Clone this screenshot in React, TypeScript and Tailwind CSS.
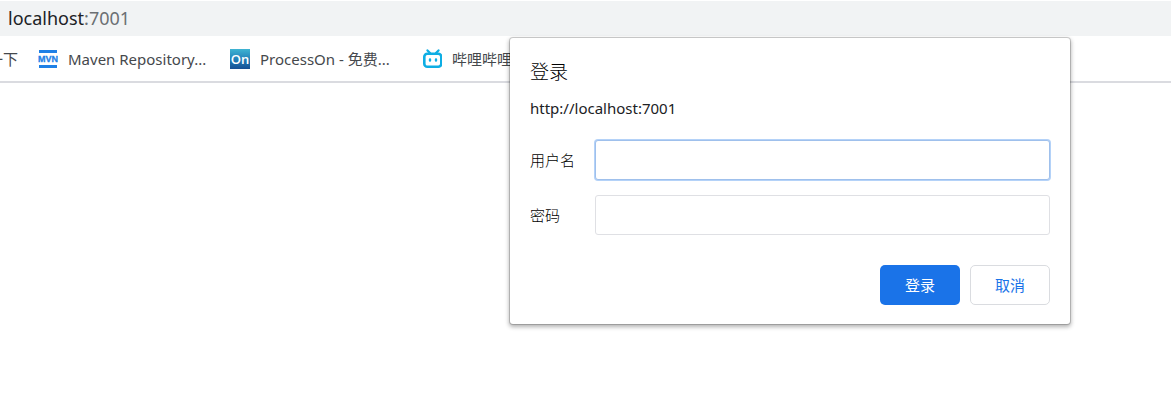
import type { ReactNode } from "react";

const MavenIcon = () => (
  <svg viewBox="0 0 20 20" className="size-5 shrink-0" aria-hidden="true">
    <path d="M1 1h18v3H1zM1 16h18v3H1z" fill="#1e80e6" />
    <text
      x="10"
      y="13"
      textAnchor="middle"
      className="font-['Liberation_Sans',sans-serif] text-[9px] font-bold"
      fill="#1e80e6"
      stroke="#1e80e6"
      strokeWidth="0.3"
    >
      MVN
    </text>
  </svg>
);

const ProcessOnIcon = () => (
  <svg viewBox="0 0 20 20" className="size-5 shrink-0" aria-hidden="true">
    <defs>
      <linearGradient id="process-on" x1="0" y1="0" x2="0" y2="1">
        <stop offset="0" stopColor="#3fb4d2" />
        <stop offset="0.5" stopColor="#2482b9" />
        <stop offset="1" stopColor="#164f93" />
      </linearGradient>
    </defs>
    <rect width="20" height="20" fill="url(#process-on)" />
    <text
      x="10"
      y="15"
      textAnchor="middle"
      className="font-['Open_Sans',sans-serif] text-[13px] font-semibold"
      fill="#fff"
    >
      On
    </text>
  </svg>
);

const BilibiliIcon = () => (
  <svg
    viewBox="0 0 20 20"
    className="size-5 shrink-0"
    fill="none"
    stroke="#0eaee4"
    strokeLinecap="round"
    aria-hidden="true"
  >
    <path d="M5.5 1.4 8 4M16.5 1.4 14 4" strokeWidth="2.2" />
    <rect x="2.3" y="4.8" width="17" height="13" rx="3" strokeWidth="2.6" />
    <path d="M8 10.4v1.2M14 10.4v1.2" strokeWidth="2.4" />
  </svg>
);

interface BookmarkProps {
  icon: ReactNode;
  label: string;
}

const Bookmark = ({ icon, label }: BookmarkProps) => (
  <a href="#" className="flex w-48 shrink-0 items-center gap-2.5">
    {icon}
    <span className="whitespace-nowrap pt-0.5">{label}</span>
  </a>
);

interface FieldProps {
  id: string;
  label: string;
  type: string;
  className: string;
}

const Field = ({ id, label, type, className }: FieldProps) => (
  <div className="flex items-center">
    <label htmlFor={id} className="w-[65px] shrink-0 font-light text-black">
      {label}
    </label>
    <input
      id={id}
      type={type}
      className={`h-10 min-w-0 flex-1 rounded-[3px] border bg-white px-3 outline-none ${className}`}
    />
  </div>
);

const LoginDialog = () => (
  <form
    role="dialog"
    aria-labelledby="dialog-title"
    onSubmit={(e) => e.preventDefault()}
    className="absolute top-[38px] left-[510px] w-[560px] rounded-[3px] bg-white px-5 pt-5 pb-[19px] text-[15px] leading-5 text-[#202124] shadow-[0_0_0_1px_rgba(0,0,0,0.16),0_2px_4px_1px_rgba(0,0,0,0.3)]"
  >
    <h1
      id="dialog-title"
      className="text-[19px] leading-7 font-light text-black"
    >
      登录
    </h1>
    <p className="mt-3">http://localhost:7001</p>
    <div className="mt-[22px] flex flex-col gap-[15px]">
      <Field
        id="username"
        label="用户名"
        type="text"
        className="border-[#9fc0ec] shadow-[0_0_0_1px_#b4d2f8]"
      />
      <Field
        id="password"
        label="密码"
        type="password"
        className="border-[#dfe0e4]"
      />
    </div>
    <div className="mt-[30px] flex justify-end gap-2.5">
      <button
        type="submit"
        className="h-10 w-20 rounded-[5px] bg-[#1a73e8] text-white"
      >
        登录
      </button>
      <button
        type="button"
        className="h-10 w-20 rounded-[5px] border border-[#dadce0] bg-white text-[#1a73e8]"
      >
        取消
      </button>
    </div>
  </form>
);

const App = () => {
  return (
    <div className="relative min-h-screen overflow-hidden bg-white font-['Noto_Sans','Noto_Sans_CJK_SC',sans-serif]">
      {/* Address bar */}
      <div className="mt-px flex h-[35px] items-center bg-[#f1f3f4] px-2 text-[18px] text-[#202124]">
        <span>localhost</span>
        <span className="text-[#6b6f73]">:7001</span>
      </div>

      {/* Bookmarks */}
      <nav className="flex h-[47px] items-center gap-5 overflow-hidden border-b-2 border-[#dadbe0] text-[15px] text-[#45484c]">
        <a
          href="#"
          className="flex w-[18px] shrink-0 justify-end overflow-hidden whitespace-nowrap pt-0.5"
        >
          一下
        </a>
        <div className="flex">
          <Bookmark icon={<MavenIcon />} label="Maven Repository..." />
          <Bookmark icon={<ProcessOnIcon />} label="ProcessOn - 免费..." />
          <Bookmark icon={<BilibiliIcon />} label="哔哩哔哩" />
        </div>
      </nav>

      <LoginDialog />
    </div>
  );
};

export default App;
